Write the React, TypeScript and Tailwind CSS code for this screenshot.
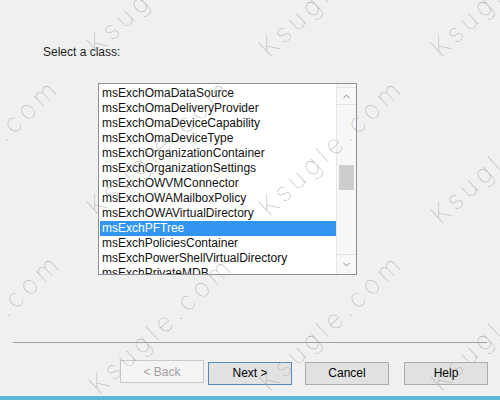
import React from 'react';
import { ChevronUp, ChevronDown } from 'lucide-react';

const classes = [
  'msExchOmaDataSource',
  'msExchOmaDeliveryProvider',
  'msExchOmaDeviceCapability',
  'msExchOmaDeviceType',
  'msExchOrganizationContainer',
  'msExchOrganizationSettings',
  'msExchOWVMConnector',
  'msExchOWAMailboxPolicy',
  'msExchOWAVirtualDirectory',
  'msExchPFTree',
  'msExchPoliciesContainer',
  'msExchPowerShellVirtualDirectory',
  'msExchPrivateMDB',
];

// watermark anchors (bottom-left of each rotated label)
const marks = [
  { x: -71, y: 60 }, { x: 101, y: 60 }, { x: 273, y: 63 }, { x: 445, y: 63 },
  { x: -71, y: 222 }, { x: 101, y: 222 }, { x: 273, y: 222 }, { x: 445, y: 230 },
  { x: -69, y: 397 }, { x: 103, y: 400 }, { x: 273, y: 397 }, { x: 445, y: 397 },
];

const Button = ({ label, variant = 'normal' }: { label: string; variant?: 'normal' | 'default' | 'disabled' }) => (
  <button
    className={`w-[84px] h-[23px] border text-[12px] leading-none ${
      variant === 'disabled'
        ? 'border-[#c8c8c8] bg-[#f4f4f4] text-[#a2a2a2]'
        : variant === 'default'
        ? 'border-[#5b8bb8] bg-[#e2e2e2] text-black'
        : 'border-[#adadad] bg-[#e1e1e1] text-black'
    }`}
  >
    {label}
  </button>
);

export default function App() {
  return (
    <div className="relative w-[500px] h-[400px] overflow-hidden bg-[#f0f0f0] flex flex-col font-['Liberation_Sans',Arial,sans-serif] text-black">
      <div className="pt-[44px] pl-[43px] text-[12px] leading-[16px] text-[#1e1e1e]">Select a class:</div>

      <div className="ml-[98px] mt-[23px] w-[259px] h-[192px] border border-[#8e8f94] bg-white flex">
        <div className="flex-1 overflow-hidden pt-[2px] pl-[1px]">
          {classes.map((c) => (
            <div
              key={c}
              className={`h-[15px] leading-[15px] pl-[2px] text-[12px] whitespace-nowrap ${
                c === 'msExchPFTree' ? 'bg-[#3296f0] text-white' : 'text-[#111]'
              }`}
            >
              {c}
            </div>
          ))}
        </div>
        <div className="w-[20px] bg-[#f7f7f7] border-l border-[#e6e6e6] flex flex-col">
          <div className="mt-[3px] h-[18px] border-y border-[#e2e2e2] flex items-center justify-center text-[#606060]">
            <ChevronUp size={11} strokeWidth={1.6} />
          </div>
          <div className="mt-[60px] mx-[2px] h-[25px] bg-[#cdcdcd]" />
          <div className="mt-auto mb-[1px] h-[19px] border-t border-[#e2e2e2] flex items-center justify-center text-[#606060]">
            <ChevronDown size={11} strokeWidth={1.6} />
          </div>
        </div>
      </div>

      <div className="mt-[67px] mx-[13px] h-px bg-[#a0a0a0]" />

      <div className="mt-[17px] pr-[12px] flex justify-end">
        <Button label="< Back" variant="disabled" />
        <div className="ml-[4px]">
          <Button label="Next >" variant="default" />
        </div>
        <div className="ml-[13px]">
          <Button label="Cancel" />
        </div>
        <div className="ml-[15px]">
          <Button label="Help" />
        </div>
      </div>

      <div className="mt-auto h-[4px] bg-[#5cb8d6]" />

      {marks.map((m, i) => (
        <div
          key={i}
          className="absolute pointer-events-none origin-bottom-left -rotate-[43deg] whitespace-nowrap font-['Inter',sans-serif] font-thin text-[26px] leading-[30px] tracking-[5px] text-[#a6a6a6]/80"
          style={{ left: m.x, top: m.y - 30 }}
        >
          Ksugle.com
        </div>
      ))}
    </div>
  );
}
